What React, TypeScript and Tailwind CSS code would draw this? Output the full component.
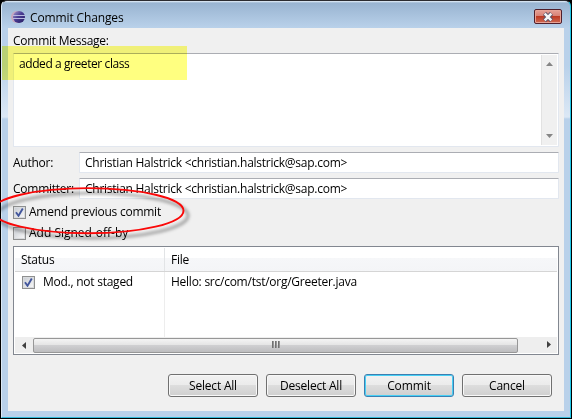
import React from 'react';

function Check({ checked = false }: { checked?: boolean }) {
  return (
    <span className="flex h-[13px] w-[13px] shrink-0 items-center justify-center border border-[#8e8f8f] bg-[#f4f4f4]">
      <span className="flex h-[9px] w-[9px] items-center justify-center bg-linear-to-br from-[#cbcfd5] to-[#f6f6f6] outline outline-[#d9dbde]">
        {checked && (
          <svg width="9" height="9" viewBox="0 0 9 9" className="overflow-visible">
            <path d="M1 4.2 3.5 7.7 7.8 0.6" fill="none" stroke="#42569c" strokeWidth="1.9" />
          </svg>
        )}
      </span>
    </span>
  );
}

function Field({ label, value }: { label: string; value: string }) {
  return (
    <div className="flex h-[21px] items-center">
      <span className="w-[66px]">{label}</span>
      <div className="flex h-[21px] w-[480px] items-center rounded-[1px] border border-[#e2e7ef] border-t-[#abadb3] bg-white pl-[5px]">
        <span className="tracking-[-0.25px]">{value}</span>
      </div>
    </div>
  );
}

function Button({ label, primary = false }: { label: string; primary?: boolean }) {
  return (
    <button
      className={
        primary
          ? 'h-[23px] w-[90px] rounded-[3px] border border-[#3c7fb1] bg-[linear-gradient(180deg,#f2f2f2_0%,#ebebeb_49%,#dddddd_50%,#cfcfcf_100%)] tracking-[-0.1px] shadow-[inset_0_0_0_1px_#48d0f5]'
          : 'h-[23px] w-[90px] rounded-[3px] border border-[#707070] bg-[linear-gradient(180deg,#f2f2f2_0%,#ebebeb_49%,#dddddd_50%,#cfcfcf_100%)] tracking-[-0.2px] shadow-[inset_0_0_0_1px_#f8f8f8]'
      }
    >
      <span className="block leading-[20px]">{label}</span>
    </button>
  );
}

export default function App() {
  return (
    <div className="relative h-[419px] w-[572px] overflow-hidden bg-black font-['Open_Sans','Noto_Sans',sans-serif] text-[12px] leading-[16px] tracking-[-0.25px] text-black">
      <div className="ml-px flex h-[418px] w-[570px] flex-col rounded-t-[6px] border-t border-r border-b border-l border-t-[#2b2b30] border-r-[#1fc8e8] border-b-[#32b9d8] border-l-[#dce9f5] bg-[linear-gradient(180deg,#e8f1fa_0px,#99b4d1_2px,#b9d1ea_27px,#b9d1ea_65px,#dce8f5_116px,#b9d1ea_118px)] px-[6px]">
        <header className="flex h-[27px] items-center pt-[5px] pr-[2px] pl-[3px]">
          <svg width="14" height="14" viewBox="0 0 14 14">
            <defs>
              <linearGradient id="globe" x1="0" x2="1" y1="0" y2="1">
                <stop offset="0" stopColor="#a99fd0" />
                <stop offset=".45" stopColor="#4a3d94" />
                <stop offset="1" stopColor="#241b60" />
              </linearGradient>
            </defs>
            <circle cx="6" cy="7" r="6" fill="#c8a7be" />
            <circle cx="8" cy="7" r="6" fill="url(#globe)" />
            <path d="M2 5.5h12M2 8.5h12" stroke="#b9badf" />
          </svg>
          <span className="mt-px ml-[5px] grow tracking-[-0.13px]">Commit Changes</span>
          <div className="mb-[1px] flex h-[15px] w-[28px] items-center justify-center rounded-[2px] border border-[#501f2b] bg-[linear-gradient(180deg,#e6a197_0%,#d88276_45%,#bd3a24_50%,#d06a53_100%)] shadow-[inset_0_0_0_1px_#e7a397]">
            <svg width="12" height="10" viewBox="0 0 12 10">
              <path d="M2.5 1.5 9.5 8.5M9.5 1.5 2.5 8.5" stroke="#5a536a" strokeWidth="4.4" />
              <path d="M2.7 1.7 9.3 8.3M9.3 1.7 2.7 8.3" stroke="#f5f5f5" strokeWidth="2.5" />
            </svg>
          </div>
        </header>
        <main className="flex h-[383px] w-[556px] flex-col bg-[#f0f0f0] px-[5px] pt-[5px]">
          <span className="h-[20px] leading-[15px]">Commit Message:</span>
          <div className="flex h-[94px] w-[546px] rounded-[1px] border border-[#e2e7ef] border-t-[#abadb3] bg-white">
            <div className="grow pt-[2px] pl-[5px] tracking-[-0.42px]">added a greeter class</div>
            <div className="my-px mr-px flex w-[16px] flex-col items-center justify-between border-l border-[#e2e2e2] bg-[#f0f0f0] py-[7px]">
              <svg width="7" height="4"><path d="M0 4 3.5 0 7 4Z" fill="#858585" /></svg>
              <svg width="7" height="4"><path d="M0 0 3.5 4 7 0Z" fill="#858585" /></svg>
            </div>
          </div>
          <div className="mt-[5px] flex flex-col gap-[5px]">
            <Field label="Author:" value="Christian Halstrick <christian.halstrick@sap.com>" />
            <Field label="Committer:" value="Christian Halstrick <christian.halstrick@sap.com>" />
          </div>
          <div className="mt-[5px] flex flex-col gap-[5px]">
            <label className="flex h-[16px] items-center gap-[3px]"><Check checked /><span>Amend previous commit</span></label>
            <label className="flex h-[16px] items-center gap-[3px]"><Check /><span className="tracking-[0px]">Add Signed-off-by</span></label>
          </div>
          <section className="mt-[5px] flex h-[109px] w-[546px] flex-col border border-[#828790] bg-white p-px">
            <div className="flex h-[24px] border-b border-[#d5d5d5] bg-[linear-gradient(180deg,#fff_0%,#fff_42%,#f6f7f9_43%,#f4f5f7_100%)] leading-[24px]">
              <div className="w-[150px] border-r border-[#e2e4e6] pl-[6px]">Status</div>
              <div className="pl-[6px]">File</div>
            </div>
            <div className="flex h-[66px] grow">
              <div className="flex w-[150px] border-r border-[#ededed] pt-[4px] pl-[7px]">
                <Check checked />
                <span className="-mt-px ml-[8px] h-[16px] leading-[14px]">Mod., not staged</span>
              </div>
              <div className="pt-[3px] pl-[6px] leading-[14px]">Hello: src/com/tst/org/Greeter.java</div>
            </div>
            <div className="flex h-[16px] items-center bg-[#eeeeee]">
              <div className="flex w-[18px] justify-center"><svg width="4" height="7"><path d="M4 0 0 3.5 4 7Z" fill="#404040" /></svg></div>
              <div className="flex h-[15px] w-[485px] items-center justify-center gap-px rounded-[2px] border border-[#979797] bg-[linear-gradient(180deg,#f4f4f4_0%,#e5e5e5_45%,#cfcfd1_50%,#bdbdbf_100%)]">
                <span className="-mt-[2px] h-[7px] w-[2px] bg-linear-to-r from-[#606060] to-[#a8a8a8]" />
                <span className="-mt-[2px] h-[7px] w-[2px] bg-linear-to-r from-[#606060] to-[#a8a8a8]" />
                <span className="-mt-[2px] h-[7px] w-[2px] bg-linear-to-r from-[#606060] to-[#a8a8a8]" />
              </div>
              <div className="ml-[29px] h-[9px]"><svg width="4" height="7" className="block"><path d="M0 0 4 3.5 0 7Z" fill="#404040" /></svg></div>
            </div>
          </section>
          <div className="mt-[19px] ml-[155px] flex gap-[8px]">
            <Button label="Select All" />
            <Button label="Deselect All" />
            <Button label="Commit" primary />
            <Button label="Cancel" />
          </div>
        </main>
      </div>
      <div className="absolute top-[46px] left-[2px] h-[34px] w-[185px] bg-[#ffff80] mix-blend-multiply" />
      <svg className="absolute top-[180px] left-0" width="210" height="68" viewBox="0 180 210 68">
        <defs>
          <filter id="soft" x="-10%" y="-20%" width="120%" height="150%">
            <feGaussianBlur stdDeviation="1.8" />
          </filter>
        </defs>
        <g fill="none">
          <ellipse cx="92.5" cy="215.5" rx="95.5" ry="22.5" stroke="#000" strokeOpacity=".28" strokeWidth="3.5" filter="url(#soft)" />
          <ellipse cx="88" cy="210.7" rx="95.5" ry="22.6" stroke="#fa0808" strokeWidth="1.9" />
        </g>
      </svg>
    </div>
  );
}
